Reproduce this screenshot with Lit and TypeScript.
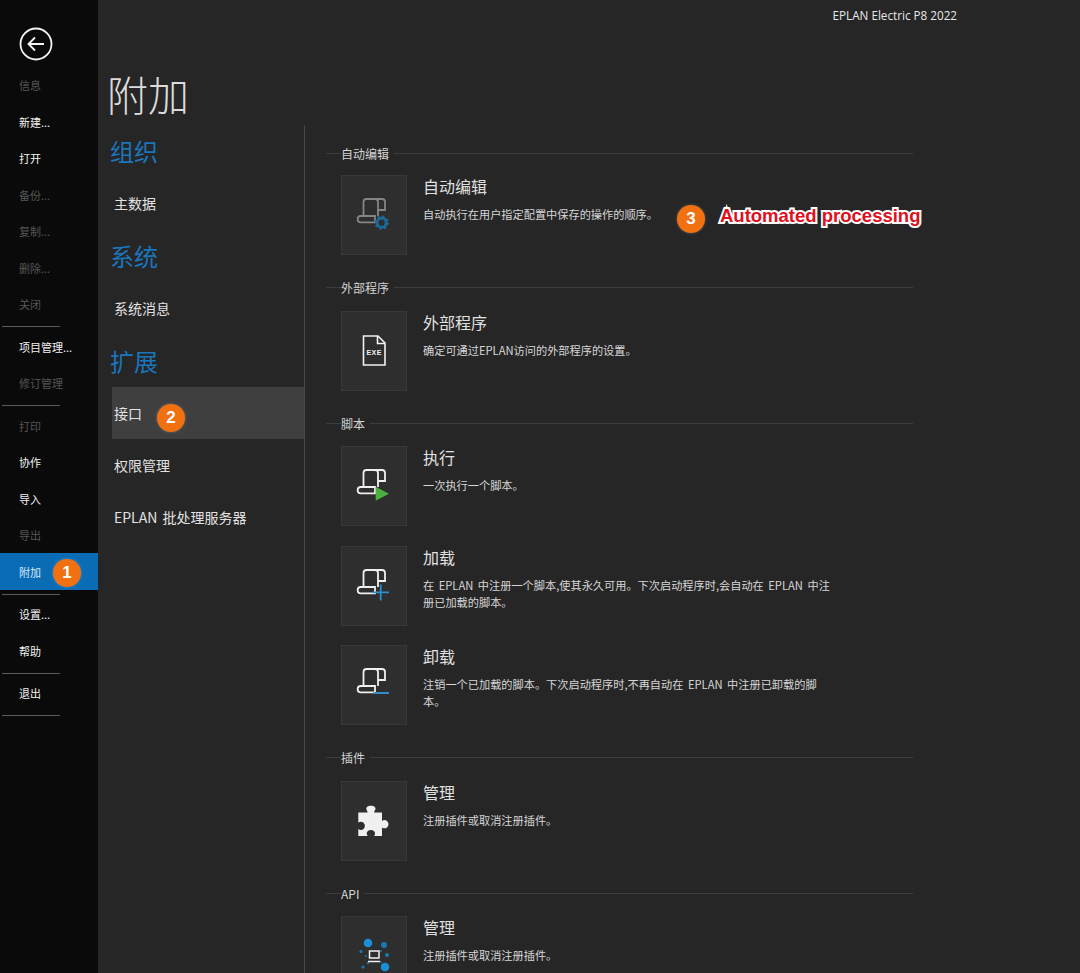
import { LitElement, css, html, svg } from 'lit';
import { customElement } from 'lit/decorators.js';

const scroll = (stroke: string) => svg`
  <path d="M9.500 21V7a3 3 0 0 1 3-3H28a3 3 0 0 1 3 3v8h-7V7a3 3 0 0 0-3-3M24 15v6M21 21H6.800a3.100 3.100 0 0 0 0 6.300H21z" fill="none" stroke=${stroke} stroke-width="1.800"/>`;

const icons: Record<string, unknown> = {
  gear: svg`${scroll('#858585')}
    <circle cx="27.700" cy="27.700" r="4.600" fill="none" stroke="#1b6a98" stroke-width="3"/>
    <circle cx="27.700" cy="27.700" r="6.400" fill="none" stroke="#1b6a98" stroke-width="1.800" stroke-dasharray="2.200 2.800"/>`,
  exe: svg`<path d="M9.500 5H24l7 7v22H9.500z" fill="none" stroke="#f2f2f2" stroke-width="1.600"/>
    <path d="M23.500 5v7.500H31" fill="none" stroke="#f2f2f2" stroke-width="1.600"/>
    <text x="20.200" y="23.500" text-anchor="middle" font-family="Liberation Sans" font-size="7" font-weight="700" letter-spacing=".5" fill="#f2f2f2">EXE</text>`,
  run: svg`${scroll('#f0f0f0')}<path d="M21.700 20.700 35 27.700 21.700 34.700z" fill="#4caf3f"/>`,
  load: svg`${scroll('#f0f0f0')}<path d="M18.500 26.300H35M26.700 18.500v16" fill="none" stroke="#2e8fc8" stroke-width="1.800"/>`,
  unload: svg`${scroll('#f0f0f0')}<path d="M19.500 28H35" fill="none" stroke="#2e8fc8" stroke-width="2"/>`,
  puzzle: svg`<path d="M4.300 11.600H13.500c1-1-2.600-3.200-.6-5.600 1.700-1.800 6.400-1.800 8 0 2 2.400-1.600 4.600-.6 5.600H28v8.400c1-1 3.400-1.400 5 0 2 1.800 2 4.700 0 6.400-1.600 1.400-4 1-5 0V35H20c1.200-1 1.600-3.400-.1-5-1.700-1.500-4.300-1.500-6 0-1.700 1.600-1.300 4-.1 5H4.300V28c1.400 1.200 3.800 1.400 5.300-.1 1.700-1.700 1.700-4.600 0-6.200-1.500-1.500-3.900-1.300-5.300-.1z" fill="#f0f0f0"/>`,
  api: svg`<circle cx="14" cy="7" r="4.300" fill="#1a8fd6"/><circle cx="30" cy="9" r="3" fill="#1a78b4"/>
    <circle cx="31" cy="31" r="4.300" fill="#1a8fd6"/><circle cx="7" cy="15.500" r="1.600" fill="#1a78b4"/>
    <circle cx="33" cy="19" r="2" fill="#1a78b4"/><circle cx="9" cy="31" r="1.600" fill="#1a78b4"/>
    <circle cx="12" cy="20" r="1" fill="#1a78b4"/><circle cx="27" cy="15" r="1" fill="#1a78b4"/><circle cx="27" cy="26" r="1" fill="#1a78b4"/><circle cx="14" cy="27" r="1.200" fill="#1a78b4"/>
    <path d="M15.500 15h9.500v7h-9.500zM14 25.500h12" fill="none" stroke="#f0f0f0" stroke-width="1.500"/>`,
};

const sideGroups = [
  [['信息', 1], ['新建...', 0], ['打开', 0], ['备份...', 1], ['复制...', 1], ['删除...', 1], ['关闭', 1]],
  [['项目管理...', 0], ['修订管理', 1]],
  [['打印', 1], ['协作', 0], ['导入', 0], ['导出', 1], ['附加', 2]],
  [['设置...', 0], ['帮助', 0]],
  [['退出', 0]],
] as [string, number][][];

const sections = [
  { head: '自动编辑', rows: [{ icon: 'gear', title: '自动编辑', text: '自动执行在用户指定配置中保存的操作的顺序。', note: true }] },
  { head: '外部程序', rows: [{ icon: 'exe', title: '外部程序', text: '确定可通过EPLAN访问的外部程序的设置。' }] },
  {
    head: '脚本',
    rows: [
      { icon: 'run', title: '执行', text: '一次执行一个脚本。' },
      { icon: 'load', title: '加载', text: '在 EPLAN 中注册一个脚本,使其永久可用。下次启动程序时,会自动在 EPLAN 中注册已加载的脚本。' },
      { icon: 'unload', title: '卸载', text: '注销一个已加载的脚本。下次启动程序时,不再自动在 EPLAN 中注册已卸载的脚本。' },
    ],
  },
  { head: '插件', rows: [{ icon: 'puzzle', title: '管理', text: '注册插件或取消注册插件。' }] },
  { head: 'API', rows: [{ icon: 'api', title: '管理', text: '注册插件或取消注册插件。' }] },
];

@customElement('app-root')
export class AppRoot extends LitElement {
  static styles = css`
    :host {
      display: grid;
      grid-template-columns: 98px 1fr;
      width: 1080px;
      height: 973px;
      overflow: hidden;
      background: #262626;
      color: #e6e6e6;
      font-family: 'Noto Sans CJK SC', 'Noto Sans', sans-serif;
    }

    .side {
      background: #0a0a0a;
      padding-top: 27px;
    }
    .back {
      display: block;
      width: 34px;
      height: 34px;
      margin: 0 0 5px 19px;
    }
    .side-group {
      padding: 1.2px 0 3.7px;
    }
    .side-item {
      position: relative;
      display: flex;
      align-items: center;
      height: 36.5px;
      padding-left: 19px;
      font-size: 11px;
      color: #f2f2f2;
    }
    .side-item.dim {
      color: #555;
    }
    .side-item.active {
      background: #0a6cb5;
      color: #dbe9f5;
    }
    .rule {
      height: 1px;
      width: 58px;
      margin-left: 2px;
      background: #5a5a5a;
    }

    .badge {
      position: absolute;
      width: 28px;
      height: 28px;
      border-radius: 50%;
      background: #f1700f;
      color: #fff;
      font: 700 17px/28px 'Liberation Sans', sans-serif;
      text-align: center;
      box-shadow: 0 0 3px rgba(255, 255, 255, 0.25);
    }
    .side-item .badge {
      left: 53px;
      top: 6px;
    }

    .main {
      display: flex;
      flex-direction: column;
      min-width: 0;
    }
    .top {
      height: 125px;
      flex: none;
    }
    .product {
      padding: 8px 123px 0 0;
      text-align: right;
      font: 11.7px/15px 'Open Sans', sans-serif;
      color: #e8e8e8;
    }
    h1 {
      margin: 45px 0 0 9px;
      font-size: 41px;
      line-height: 50px;
      font-weight: 300;
      color: #dcdcdc;
    }
    .body {
      display: flex;
      flex: 1;
      min-height: 0;
    }

    .cats {
      box-sizing: border-box;
      flex: none;
      width: 207px;
      padding-top: 10px;
      border-right: 1px solid #474747;
    }
    .cat-head {
      height: 34px;
      margin: 11px 0 8px 12px;
      font-size: 24px;
      line-height: 31px;
      color: #1b75bb;
    }
    .cat-head:first-child {
      margin-top: 0;
    }
    .cat-item {
      position: relative;
      display: flex;
      align-items: center;
      box-sizing: border-box;
      height: 52px;
      margin-left: 14px;
      padding: 0 0 1px 2px;
      font-size: 14px;
      word-spacing: 2px;
      color: #e2e2e2;
    }
    .cat-item.active {
      background: #3f3f3f;
    }
    .cat-item .badge {
      left: 45px;
      top: 17px;
    }

    .content {
      width: 587px;
      padding: 20px 0 0 21px;
    }
    .section + .section {
      margin-top: 24.5px;
    }
    .section + .section .sec-head {
      margin-bottom: 15px;
    }
    .sec-head {
      display: flex;
      align-items: center;
      height: 16px;
      font-size: 12px;
      color: #d4d4d4;
      margin-bottom: 14px;
    }
    .sec-head::before,
    .sec-head::after {
      content: '';
      height: 1px;
      background: #3d3d3d;
    }
    .sec-head::before {
      flex: none;
      width: 15px;
    }
    .sec-head::after {
      flex: 1;
      margin-left: 5px;
    }
    .row {
      position: relative;
      display: flex;
      gap: 16px;
    }
    .row + .row {
      margin-top: 19.5px;
    }
    .tile {
      box-sizing: border-box;
      display: flex;
      align-items: center;
      justify-content: center;
      flex: none;
      width: 66px;
      height: 80px;
      margin-left: 15px;
      background: #2e2e2e;
      border: 1px solid #383838;
    }
    .tile svg {
      width: 40px;
      height: 40px;
    }
    .row-title {
      margin-top: -1px;
      font-size: 16px;
      line-height: 24px;
      color: #e0e0e0;
    }
    .row-text {
      width: 408px;
      margin-top: 8px;
      font-size: 11.2px;
      line-height: 17px;
      word-spacing: 2px;
      color: #d6d6d6;
    }
    .note {
      position: absolute;
      left: 351px;
      top: 30px;
      display: flex;
      align-items: center;
      height: 28px;
    }
    .note .badge {
      position: static;
      flex: none;
      margin-right: 15px;
      font-style: normal;
    }
    .note span {
      position: relative;
      top: -3px;
      font: 700 18.5px/24px 'Liberation Sans', sans-serif;
      white-space: nowrap;
      color: #e0101e;
      -webkit-text-stroke: 4px #fff;
      paint-order: stroke fill;
    }
  `;

  renderSide() {
    return html`
      <nav class="side">
        <svg class="back" viewBox="0 0 34 34" fill="none" stroke="#f4f4f4">
          <circle cx="17" cy="17" r="15.500" stroke-width="1.800" />
          <path d="M25 17H10M16 10.500 9.500 17l6.500 6.500" stroke-width="1.800" />
        </svg>
        ${sideGroups.map(
          (group, i) => html`
            ${i ? html`<div class="rule"></div>` : ''}
            <div class="side-group">
              ${group.map(
                ([label, kind]) => html`
                  <div class="side-item ${kind === 1 ? 'dim' : kind === 2 ? 'active' : ''}">
                    ${label}${kind === 2 ? html`<span class="badge">1</span>` : ''}
                  </div>
                `,
              )}
            </div>
          `,
        )}
        <div class="rule"></div>
      </nav>
    `;
  }

  renderCats() {
    return html`
      <div class="cats">
        <div class="cat-head">组织</div>
        <div class="cat-item">主数据</div>
        <div class="cat-head">系统</div>
        <div class="cat-item">系统消息</div>
        <div class="cat-head">扩展</div>
        <div class="cat-item active">接口<span class="badge">2</span></div>
        <div class="cat-item">权限管理</div>
        <div class="cat-item">EPLAN 批处理服务器</div>
      </div>
    `;
  }

  render() {
    return html`
      ${this.renderSide()}
      <main class="main">
        <div class="top">
          <div class="product">EPLAN Electric P8 2022</div>
          <h1>附加</h1>
        </div>
        <div class="body">
          ${this.renderCats()}
          <div class="content">
            ${sections.map(
              (sec) => html`
                <section class="section">
                  <div class="sec-head">${sec.head}</div>
                  ${sec.rows.map(
                    (row: any) => html`
                      <div class="row">
                        <div class="tile"><svg viewBox="0 0 40 40">${icons[row.icon]}</svg></div>
                        <div>
                          <div class="row-title">${row.title}</div>
                          <div class="row-text">${row.text}</div>
                        </div>
                        ${row.note
                          ? html`<div class="note"><i class="badge">3</i><span>Automated processing</span></div>`
                          : ''}
                      </div>
                    `,
                  )}
                </section>
              `,
            )}
          </div>
        </div>
      </main>
    `;
  }
}
